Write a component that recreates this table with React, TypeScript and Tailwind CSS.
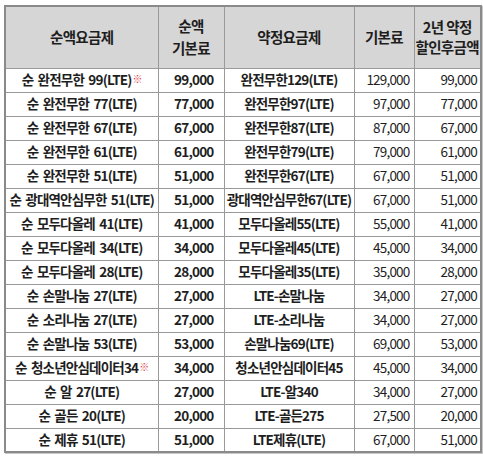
const rows: [string, string, string, string, string, boolean?][] = [
  ["순 완전무한 99(LTE)", "99,000", "완전무한129(LTE)", "129,000", "99,000", true],
  ["순 완전무한 77(LTE)", "77,000", "완전무한97(LTE)", "97,000", "77,000"],
  ["순 완전무한 67(LTE)", "67,000", "완전무한87(LTE)", "87,000", "67,000"],
  ["순 완전무한 61(LTE)", "61,000", "완전무한79(LTE)", "79,000", "61,000"],
  ["순 완전무한 51(LTE)", "51,000", "완전무한67(LTE)", "67,000", "51,000"],
  ["순 광대역안심무한 51(LTE)", "51,000", "광대역안심무한67(LTE)", "67,000", "51,000"],
  ["순 모두다올레 41(LTE)", "41,000", "모두다올레55(LTE)", "55,000", "41,000"],
  ["순 모두다올레 34(LTE)", "34,000", "모두다올레45(LTE)", "45,000", "34,000"],
  ["순 모두다올레 28(LTE)", "28,000", "모두다올레35(LTE)", "35,000", "28,000"],
  ["순 손말나눔 27(LTE)", "27,000", "LTE-손말나눔", "34,000", "27,000"],
  ["순 소리나눔 27(LTE)", "27,000", "LTE-소리나눔", "34,000", "27,000"],
  ["순 손말나눔 53(LTE)", "53,000", "손말나눔69(LTE)", "69,000", "53,000"],
  ["순 청소년안심데이터34", "34,000", "청소년안심데이터45", "45,000", "34,000", true],
  ["순 알 27(LTE)", "27,000", "LTE-알340", "34,000", "27,000"],
  ["순 골든 20(LTE)", "20,000", "LTE-골든275", "27,500", "20,000"],
  ["순 제휴 51(LTE)", "51,000", "LTE제휴(LTE)", "67,000", "51,000"],
];

const cell = "border border-[#9a9a9a] p-0";

export default function App() {
  return (
    <div
      className="w-[483px] h-[460px] bg-white pt-[5px] pl-[4px] text-[#1e1e1e]"
      style={{ fontFamily: '"Noto Sans CJK KR", "Noto Sans", sans-serif' }}
    >
      <table className="border-collapse table-fixed w-[476px] border-2 border-[#8a8a8a] shadow-[1px_1px_0_#c8c8c8]">
        <colgroup>
          <col className="w-[153px]" />
          <col className="w-[66px]" />
          <col className="w-[130px]" />
          <col className="w-[60px]" />
          <col className="w-[67px]" />
        </colgroup>
        <thead>
          <tr className="bg-[#d6d6d6] h-[62px] text-[14.5px] tracking-[-0.6px]">
            <th className={cell + " font-bold leading-none"}>순액요금제</th>
            <th className={cell + " font-bold leading-[22px]"}>
              순액
              <br />
              기본료
            </th>
            <th className={cell + " font-bold leading-none"}>약정요금제</th>
            <th className={cell + " font-bold leading-none"}>기본료</th>
            <th className={cell + " font-bold leading-[20px] whitespace-nowrap"}>
              2년 약정
              <br />
              할인후금액
            </th>
          </tr>
        </thead>
        <tbody className="text-[13.5px] tracking-[-0.8px] leading-none [word-spacing:2px]">
          {rows.map(([a, b, c, d, e, mark], i) => (
            <tr key={i} className="h-[24px]">
              <td className={cell + " text-center font-bold whitespace-nowrap"}>
                {a}
                {mark && (
                  <sup className="text-[#e0404a] text-[10px] font-normal ml-[1px] relative top-[-2px]">※</sup>
                )}
              </td>
              <td className={cell + " text-right font-bold pr-[10px]"}>{b}</td>
              <td className={cell + " text-center font-bold whitespace-nowrap"}>{c}</td>
              <td className={cell + " text-right pr-[4px]"}>{d}</td>
              <td className={cell + " text-right pr-[3px]"}>{e}</td>
            </tr>
          ))}
        </tbody>
      </table>
    </div>
  );
}
